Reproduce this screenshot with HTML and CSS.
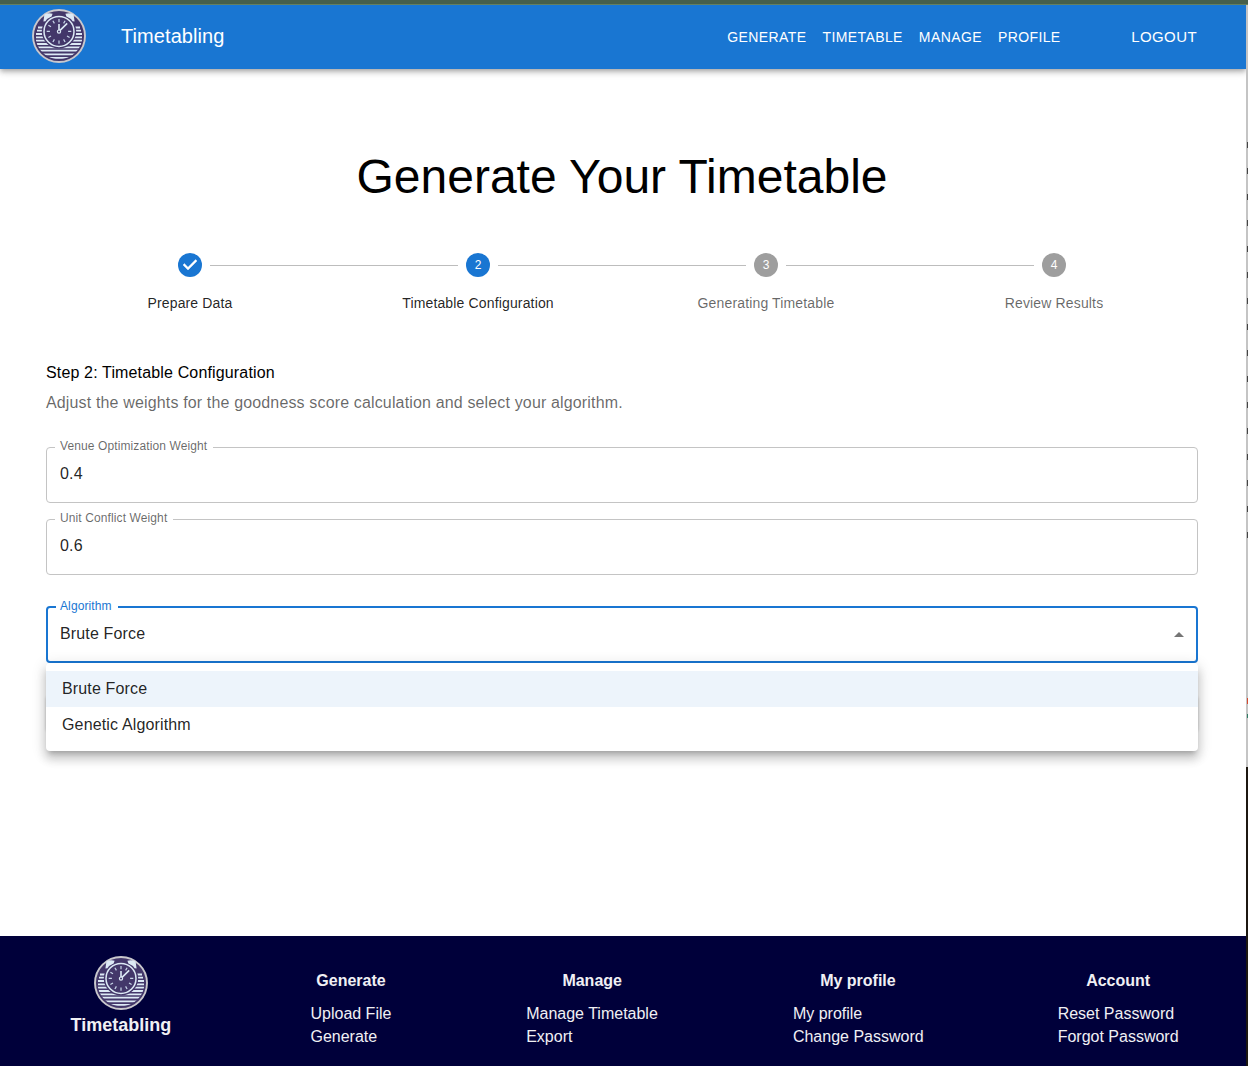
FILE: index.html
```html
<!DOCTYPE html>
<html lang="en">
<head>
<meta charset="utf-8">
<title>Timetabling</title>
<link rel="stylesheet" href="styles.css">
</head>
<body>
<svg class="defs" width="0" height="0" aria-hidden="true">
  <defs>
    <clipPath id="disc"><circle cx="27" cy="27" r="23.4"/></clipPath>
    <symbol id="logo" viewBox="0 0 54 54">
      <circle cx="27" cy="27" r="26" fill="#43376a" stroke="#c9c8cd" stroke-width="1.9"/>
      <g clip-path="url(#disc)" stroke="#dce9f5" stroke-width="1.8">
        <path d="M6 18.5H48M5 21.7H49M4 25H50M4 28.3H50M4 31.6H50M4 35H50M4 38.3H50M5 41.6H49M8 45.3H46M11 48.9H43"/>
      </g>
      <circle cx="27" cy="22.4" r="17.2" fill="#43376a"/>
      <path d="M11.4 12.6L12.4 5.6Q16 3.6 20.6 4.7L19.6 7.4Q15.4 9 13.4 12.2ZM42.6 12.6L41.6 5.6Q38 3.6 33.4 4.7L34.4 7.4Q38.6 9 40.6 12.2Z" fill="#dce9f5"/>
      <circle cx="27" cy="22.4" r="15" fill="#43376a" stroke="#dce9f5" stroke-width="1.5"/>
      <path d="M27 10.1V13.3M27 31.5V34.7M14.7 22.4H17.9M36.1 22.4H39.3M20.9 11.8L22.4 14.4M33.1 11.8L31.6 14.4M16.4 16.3L19 17.8M37.6 28.5L35 27M16.4 28.5L19 27M20.9 33L22.4 30.4M33.1 33L31.6 30.4" stroke="#c9d7ea" stroke-width="1.2"/>
      <path d="M27 22.4V15M27 22.4L35.2 14.4" stroke="#dce9f5" stroke-width="1.6"/>
      <circle cx="27" cy="22.6" r="1.6" fill="#43376a" stroke="#dce9f5" stroke-width="1.2"/>
    </symbol>
  </defs>
</svg>
<div class="screen">
  <div class="top-edge"></div>
  <div class="window">
    <header class="appbar">
      <svg class="logo"><use href="#logo"/></svg>
      <div class="brand">Timetabling</div>
      <nav class="nav">
        <a>GENERATE</a><a>TIMETABLE</a><a>MANAGE</a><a>PROFILE</a>
      </nav>
      <a class="logout">LOGOUT</a>
    </header>
    <main class="main">
      <h1 class="title">Generate Your Timetable</h1>
      <ol class="stepper">
        <li class="step active"><span class="dot"><svg width="24" height="24" viewBox="0 0 24 24"><path d="M10 17l-5-5 1.4-1.4 3.6 3.6 7.6-7.6L19 8l-9 9z" fill="#fff" stroke="#fff" stroke-width=".4"/></svg></span><span class="step-label">Prepare Data</span></li>
        <li class="step active"><span class="dot">2</span><span class="step-label">Timetable Configuration</span></li>
        <li class="step"><span class="dot">3</span><span class="step-label">Generating Timetable</span></li>
        <li class="step"><span class="dot">4</span><span class="step-label">Review Results</span></li>
      </ol>
      <h2 class="subtitle">Step 2: Timetable Configuration</h2>
      <p class="hint">Adjust the weights for the goodness score calculation and select your algorithm.</p>
      <fieldset class="field"><legend class="legend-venue">Venue Optimization Weight</legend><div class="value">0.4</div></fieldset>
      <fieldset class="field"><legend class="legend-unit">Unit Conflict Weight</legend><div class="value">0.6</div></fieldset>
      <div class="select">
        <fieldset class="field focused"><legend class="legend-algorithm">Algorithm</legend>
          <div class="value">Brute Force<svg class="arrow" width="24" height="24" viewBox="0 0 24 24"><path d="M7 14l5-5 5 5z" fill="#757575"/></svg></div>
        </fieldset>
        <ul class="menu"><li class="selected">Brute Force</li><li>Genetic Algorithm</li></ul>
      </div>
      <div class="actions"></div>
    </main>
    <footer class="footer">
      <div class="foot-brand"><svg class="logo"><use href="#logo"/></svg><strong>Timetabling</strong></div>
      <section class="col col-generate"><h3>Generate</h3><a>Upload File</a><a>Generate</a></section>
      <section class="col col-manage"><h3>Manage</h3><a>Manage Timetable</a><a>Export</a></section>
      <section class="col col-profile"><h3>My profile</h3><a>My profile</a><a>Change Password</a></section>
      <section class="col col-account"><h3>Account</h3><a>Reset Password</a><a>Forgot Password</a></section>
    </footer>
  </div>
  <div class="side-edge"><div class="side-sheet"></div></div>
</div>
</body>
</html>
```
FILE: styles.css
```css
* { box-sizing: border-box; }
body { margin: 0; font-family: "Liberation Sans", Arial, sans-serif; font-size: 16px; color: #000; background: #fff; }
.defs { display: block; position: absolute; }
.screen { display: grid; grid-template: 5px 1061px / 1246px 2px; width: 1248px; height: 1066px; overflow: hidden; }
.top-edge { grid-column: 1 / 3; background: #465f4a; border-bottom: 1px solid #64805f; }
.window { display: flex; flex-direction: column; background: #fff; }

.appbar { height: 64px; flex: none; display: flex; align-items: center; padding: 0 49px 2px 32px; background: #1976d2; color: #fff;
  box-shadow: 0 2px 4px -1px rgba(0,0,0,.2), 0 4px 5px rgba(0,0,0,.14), 0 1px 10px rgba(0,0,0,.12); clip-path: inset(0 0 -16px 0); }
.logo { width: 54px; height: 54px; flex: none; display: block; }
.brand { margin: 0 auto 0 35px; font-size: 20px; letter-spacing: .08px; line-height: 32px; }
.nav { display: flex; gap: 16px; margin: 2px 70.5px 0 0; font-size: 14px; letter-spacing: .4px; }
.logout { font-size: 15px; letter-spacing: .42px; }

.main { flex: 1; padding: 80px 48px 0 46px; }
.title { margin: 0; font-size: 48px; font-weight: 400; line-height: 56px; text-align: center; letter-spacing: 0; }
.stepper { list-style: none; margin: 48px 0 0; padding: 0; display: grid; grid-template-columns: repeat(4, 288px); }
.step { position: relative; display: flex; flex-direction: column; align-items: center; color: rgba(0,0,0,.6); }
.step + .step::before { content: ""; position: absolute; top: 12px; left: calc(-50% + 20px); right: calc(50% + 20px); border-top: 1px solid #bdbdbd; }
.dot { width: 24px; height: 24px; border-radius: 50%; background: #9e9e9e; color: #fff; font-size: 12px; line-height: 24px; text-align: center; }
.dot svg { display: block; }
.active { color: rgba(0,0,0,.87); }
.active .dot { background: #1976d2; }
.step-label { margin-top: 16px; font-size: 14px; line-height: 20px; letter-spacing: .15px; }
.subtitle { margin: 48px 0 0; font-size: 16px; font-weight: 400; line-height: 24px; letter-spacing: .15px; }
.hint { margin: 6px 0 32px; line-height: 24px; letter-spacing: .15px; color: rgba(0,0,0,.6); }

.field { margin: -5px 0 16px; min-width: 0; height: 61px; padding: 0 8px; border: 1px solid #c4c4c4; border-radius: 4px; }
.field legend { padding: 0 5px; height: 11px; line-height: 9px; font-size: 12px; letter-spacing: .11px; color: rgba(0,0,0,.6); }
.legend-venue { width: 158px; white-space: nowrap; }
.legend-unit { width: 118px; white-space: nowrap; }
.value { padding: 9px 5px 0; line-height: 24px; letter-spacing: .15px; color: rgba(0,0,0,.87); display: flex; justify-content: space-between; }
.select { display: flow-root; position: relative; margin-top: 32px; height: 56px; }
.focused { height: 62px; margin: -6px 0 0; border: 2px solid #1976d2; }
.field .legend-algorithm { width: 62px; padding: 0 4px; line-height: 11px; color: #1976d2; }
.focused .value { padding: 10px 0 0 4px; }
.arrow { margin: 1px -3px 0 0; }
.menu { position: absolute; z-index: 1; top: 56px; left: 0; right: 0; margin: 0; padding: 8px 0; list-style: none; background: #fff; border-radius: 4px;
  box-shadow: 0 5px 5px -3px rgba(0,0,0,.2), 0 8px 10px 1px rgba(0,0,0,.14), 0 3px 14px 2px rgba(0,0,0,.12); }
.menu li { height: 36px; padding: 0 16px; line-height: 35px; letter-spacing: .15px; color: rgba(0,0,0,.87); }
.menu .selected { background: #edf4fb; }
.actions { height: 36px; margin-top: 32px; border-radius: 4px; box-shadow: 0 1px 3px rgba(0,0,0,.2); }

.footer { height: 130px; flex: none; display: flex; justify-content: space-around; background: #00003a; color: #f0f0f4; }
.foot-brand { width: 108.4px; padding: 20px 1.4px 0 0; display: flex; flex-direction: column; align-items: center; }
.foot-brand strong { font-size: 18px; line-height: 24px; margin-top: 3px; }
.col { display: flex; flex-direction: column; padding-top: 33px; line-height: 23px; white-space: nowrap; }
.col h3 { margin: 0 0 10px; font-size: 16px; font-weight: 700; text-align: center; }
.col-generate { width: 81px; }
.col-manage { width: 132px; }
.col-profile { width: 130px; }
.col-account { width: 121px; }

.side-edge { background: #1c1710; }
.side-sheet { height: 762px; background:
  linear-gradient(#d6492f, #d6492f) 1px 693px / 1px 6px no-repeat,
  linear-gradient(#2e7c64, #2e7c64) 1px 709px / 1px 4px no-repeat,
  repeating-linear-gradient(#c4c4c4 0 18px, #444 18px 24px, #c4c4c4 24px 26px) 1px 119px / 1px 420px no-repeat, #c4c4c4; }
```
